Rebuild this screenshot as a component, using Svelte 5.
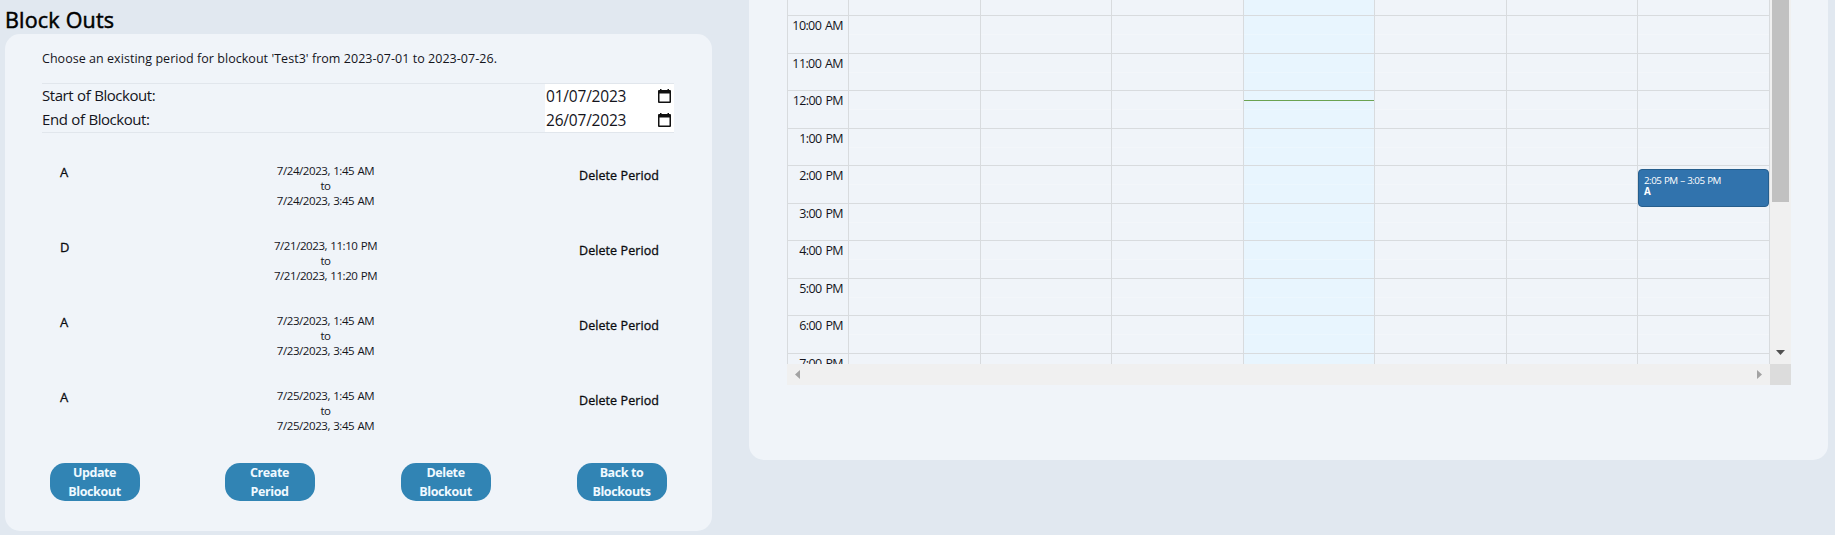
<script>
  const periods = [
    { name: 'A', from: '7/24/2023, 1:45 AM', to: '7/24/2023, 3:45 AM' },
    { name: 'D', from: '7/21/2023, 11:10 PM', to: '7/21/2023, 11:20 PM' },
    { name: 'A', from: '7/23/2023, 1:45 AM', to: '7/23/2023, 3:45 AM' },
    { name: 'A', from: '7/25/2023, 1:45 AM', to: '7/25/2023, 3:45 AM' }
  ];
  const dates = [
    { label: 'Start of Blockout:', value: '01/07/2023' },
    { label: 'End of Blockout:', value: '26/07/2023' }
  ];
  const actions = [
    ['Update', 'Blockout'],
    ['Create', 'Period'],
    ['Delete', 'Blockout'],
    ['Back to', 'Blockouts']
  ];
  const hours = ['', '10:00 AM', '11:00 AM', '12:00 PM', '1:00 PM', '2:00 PM', '3:00 PM', '4:00 PM', '5:00 PM', '6:00 PM', '7:00 PM'];
  const days = [0, 1, 2, 3, 4, 5, 6];
</script>

<div class="page">
  <section class="left">
    <h1>Block Outs</h1>
    <div class="card">
      <p class="intro">Choose an existing period for blockout 'Test3' from 2023-07-01 to 2023-07-26.</p>
      <div class="range">
        {#each dates as d}
          <div class="range-row">
            <span class="range-label">{d.label}</span>
            <span class="date-input">
              <span class="date-value">{d.value}</span>
              <svg width="13" height="14" viewBox="0 0 13 14">
                <path d="M2 0h1.5v1h6V0H11v1h1a1 1 0 0 1 1 1v11a1 1 0 0 1-1 1H1a1 1 0 0 1-1-1V2a1 1 0 0 1 1-1h1zM1.5 4.5v8h10v-8z" fill="#111" fill-rule="evenodd" />
              </svg>
            </span>
          </div>
        {/each}
      </div>
      <div class="periods">
        {#each periods as p}
          <div class="period">
            <span class="name">{p.name}</span>
            <span class="when"><span>{p.from}</span><span>to</span><span>{p.to}</span></span>
            <span class="delete">Delete Period</span>
          </div>
        {/each}
      </div>
      <div class="actions">
        {#each actions as a}
          <button><span>{a[0]}</span><span>{a[1]}</span></button>
        {/each}
      </div>
    </div>
  </section>

  <section class="right">
    <div class="scroller">
      <div class="view">
        <div class="axis">
          {#each hours as h}
            <div class="slot"><span>{h}</span></div>
          {/each}
        </div>
        {#each days as day}
          <div class="day" class:today={day === 3}>
            {#each hours as h}
              <div class="slot"></div>
            {/each}
            {#if day === 3}<div class="now"></div>{/if}
            {#if day === 6}
              <div class="event">
                <span>2:05 PM – 3:05 PM</span>
                <b>A</b>
              </div>
            {/if}
          </div>
        {/each}
      </div>
      <div class="vbar">
        <div class="thumb"></div>
        <svg width="9" height="5" viewBox="0 0 9 5"><path d="M0 0h9L4.5 5z" fill="#505050" /></svg>
      </div>
      <div class="hbar">
        <svg width="5" height="9" viewBox="0 0 5 9"><path d="M5 0v9L0 4.5z" fill="#a3a3a3" /></svg>
        <svg width="5" height="9" viewBox="0 0 5 9"><path d="M0 0v9l5-4.5z" fill="#a3a3a3" /></svg>
      </div>
      <div class="corner"></div>
    </div>
  </section>
</div>

<style>
  :global(body) {
    background: #e1e8f0;
    overflow: hidden;
  }
  .page {
    display: flex;
    align-items: flex-start;
    width: 1835px;
    height: 535px;
    overflow: hidden;
    box-sizing: border-box;
    padding-left: 5px;
    font-family: 'Open Sans', 'Noto Sans', sans-serif;
    color: #14141c;
    background: #e1e8f0;
    white-space: nowrap;
  }
  .left {
    width: 707px;
    margin-right: 37px;
  }
  h1 {
    margin: 0;
    height: 34px;
    padding-top: 5px;
    box-sizing: border-box;
    font-size: 21.5px;
    line-height: 30px;
    font-weight: 500;
    letter-spacing: 0.2px;
    color: #000;
    -webkit-text-stroke: 0.5px #000;
  }
  .card {
    height: 497px;
    box-sizing: border-box;
    padding: 12px 37px 0;
    border-radius: 15px;
    background: #f0f4f9;
  }
  .intro {
    margin: 0;
    height: 37px;
    padding-top: 1px;
    box-sizing: border-box;
    line-height: 24px;
    font-size: 12.5px;
    letter-spacing: 0.04px;
  }
  .range {
    width: 632px;
    border-top: 1px solid #e1e6ec;
    border-bottom: 1px solid #e1e6ec;
  }
  .range-row {
    display: flex;
    justify-content: space-between;
    height: 24px;
    line-height: 24px;
    font-size: 15.5px;
  }
  .range-label {
    font-size: 15px;
    letter-spacing: -0.45px;
    word-spacing: 0.5px;
    line-height: 23px;
  }
  .date-input {
    display: flex;
    align-items: center;
    justify-content: space-between;
    width: 129px;
    box-sizing: border-box;
    padding: 0 3px 0 1px;
    background: #fff;
  }
  .date-value {
    letter-spacing: -0.2px;
  }
  .periods {
    padding-top: 30px;
  }
  .period {
    display: grid;
    grid-template-columns: 120px 1fr 120px;
    height: 75px;
  }
  .name {
    padding-left: 18px;
    font-size: 13px;
    line-height: 18px;
    -webkit-text-stroke: 0.3px #000;
  }
  .when {
    display: flex;
    flex-direction: column;
    align-items: center;
    padding-right: 66px;
    font-size: 11.5px;
    line-height: 15px;
    letter-spacing: -0.42px;
    word-spacing: 0.6px;
  }
  .delete {
    padding-top: 4px;
    padding-left: 24px;
    font-size: 12.5px;
    line-height: 18px;
    letter-spacing: 0.08px;
    -webkit-text-stroke: 0.3px #000;
  }
  .actions {
    display: grid;
    grid-template-columns: 175px 176px 176px 90px;
    margin-left: 8px;
  }
  button {
    display: flex;
    flex-direction: column;
    align-items: center;
    width: 90px;
    height: 38px;
    padding: 0 1px 0 0;
    border: 0;
    border-radius: 15px;
    background: #3184b4;
    color: #f0f9ff;
    font: 700 12.5px/19px 'Open Sans', sans-serif;
    letter-spacing: -0.4px;
  }
  .right {
    width: 1079px;
    height: 460px;
    flex: none;
    box-sizing: border-box;
    padding-left: 38px;
    border-radius: 0 0 15px 15px;
    background: #f0f4f9;
  }
  .scroller {
    display: grid;
    grid-template-columns: 983px 21px;
    grid-template-rows: 364px 21px;
  }
  .view {
    display: grid;
    grid-template-columns: 61px 132px 131px 132px 131px 132px 131px 132px;
    height: 364px;
    box-sizing: border-box;
    overflow: hidden;
    border-right: 1px solid #d8dbde;
  }
  .axis,
  .day {
    border-left: 1px solid #d8dbde;
    min-width: 0;
  }
  .day {
    position: relative;
  }
  .slot {
    height: 37px;
    box-sizing: border-box;
    border-top: 1px solid #d8dbde;
  }
  .slot:nth-child(even) {
    height: 38px;
  }
  .slot:first-child {
    height: 15px;
    border-top: 0;
  }
  .day .slot:not(:first-child) {
    background: linear-gradient(#fff3, #fff3) 0 18px / 100% 1px no-repeat;
  }
  .axis .slot {
    padding-right: 4px;
    text-align: right;
    font-size: 12.5px;
    line-height: 20px;
    letter-spacing: -0.6px;
    word-spacing: 1.2px;
  }
  .axis span {
    margin-right: 1px;
  }
  .today {
    background: #e8f5fe;
  }
  .now {
    position: absolute;
    left: 0;
    right: 0;
    top: 100px;
    height: 1px;
    background: #6ca352;
  }
  .event {
    position: absolute;
    left: 0;
    top: 169px;
    width: 131px;
    height: 38px;
    box-sizing: border-box;
    display: flex;
    flex-direction: column;
    padding: 5px 5px 0;
    border: 1px solid #265e8d;
    border-radius: 4px;
    background: #3173ad;
    color: #fff;
    font-size: 9.8px;
    line-height: 11px;
    letter-spacing: -0.52px;
    word-spacing: 0.6px;
  }
  .vbar {
    display: flex;
    flex-direction: column;
    align-items: center;
    justify-content: space-between;
    padding-bottom: 9px;
    background: #f0f0f0;
  }
  .thumb {
    width: 17px;
    height: 202px;
    background: #c1c1c1;
  }
  .hbar {
    display: flex;
    align-items: center;
    justify-content: space-between;
    padding: 0 8px;
    background: #f0f0f0;
  }
  .corner {
    background: #dcdcdc;
  }
</style>
